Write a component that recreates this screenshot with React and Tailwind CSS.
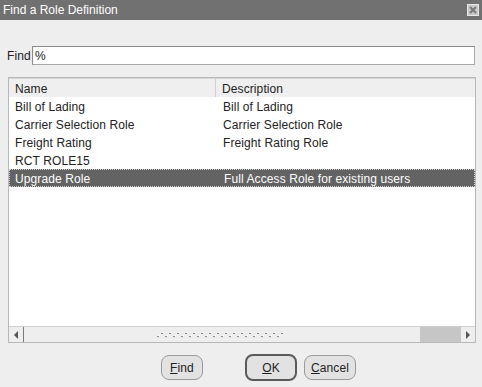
import React from "react";

const rows = [
  { name: "Bill of Lading", desc: "Bill of Lading" },
  { name: "Carrier Selection Role", desc: "Carrier Selection Role" },
  { name: "Freight Rating", desc: "Freight Rating Role" },
  { name: "RCT ROLE15", desc: "" },
  { name: "Upgrade Role", desc: "Full Access Role for existing users", selected: true },
];

function CloseIcon() {
  return (
    <svg width="12" height="12" viewBox="0 0 12 12">
      <rect x="0.5" y="0.5" width="11" height="11" fill="#c8c8c8" stroke="#e6e6e6" />
      <path d="M3 3 L9 9 M9 3 L3 9" stroke="#7a7a7a" strokeWidth="2" />
    </svg>
  );
}

function Grip() {
  const marks = [];
  for (let i = 0; i < 16; i++) {
    marks.push(<rect key={"a" + i} x={i * 8 + 4} y={2} width="2" height="1" fill="#8a8a8a" />);
    marks.push(<rect key={"b" + i} x={i * 8 + 6} y={1} width="1" height="1" fill="#ffffff" />);
    marks.push(<rect key={"c" + i} x={i * 8} y={5} width="2" height="1" fill="#8a8a8a" />);
    marks.push(<rect key={"d" + i} x={i * 8 + 2} y={4} width="1" height="1" fill="#ffffff" />);
  }
  return (
    <svg width="130" height="7" viewBox="0 0 130 7">
      {marks}
    </svg>
  );
}

function Btn({ children, def, w }) {
  return (
    <button
      className={
        def
          ? "h-[27px] rounded-[8px] border-2 border-[#5a5a5a] bg-[#e2e2e2] text-[12px] text-[#222]"
          : "h-[25px] rounded-[8px] border border-[#9a9a9a] bg-[#e2e2e2] text-[12px] text-[#222]"
      }
      style={{ width: w }}
    >
      {children}
    </button>
  );
}

export default function App() {
  return (
    <div
      className="w-[482px] h-[387px] bg-[#eeeeee] flex flex-col overflow-hidden text-[12px] text-[#222] tracking-[0.1px]"
      style={{ fontFamily: '"Liberation Sans", Arial, sans-serif' }}
    >
      <div className="h-[20px] bg-[#717171] flex items-center justify-between pl-[3px] pr-[3px] text-white text-[12px] tracking-normal">
        <span>Find a Role Definition</span>
        <CloseIcon />
      </div>

      <div className="flex items-center mt-[26px] pl-[7px]">
        <span className="w-[25px] pt-[1px]">Find</span>
        <div className="w-[443px] h-[19px] bg-white border border-[#a8a8a8] border-t-[#8a8a8a] border-l-[#8a8a8a] flex items-center pl-[2px] pt-[1px]">
          %
        </div>
      </div>

      <div className="ml-[8px] mt-[12px] w-[468px] h-[266px] border border-[#b8b8b8] bg-white flex flex-col">
        <div className="h-[19px] bg-[#efefef] flex items-center border-t border-[#d6d6d6]">
          <div className="w-[207px] h-full pl-[6px] pt-[1px] flex items-center border-r border-[#cfcfcf]">Name</div>
          <div className="pl-[6px] pt-[1px]">Description</div>
        </div>
        {rows.map((r) => (
          <div
            key={r.name}
            className={
              r.selected
                ? "h-[18px] flex items-center pt-[1px] bg-[#636363] text-white border border-dotted border-[#d0d0d0]"
                : "h-[18px] flex items-center pt-[2px]"
            }
          >
            <div className={r.selected ? "w-[207px] pl-[5px]" : "w-[207px] pl-[6px]"}>{r.name}</div>
            <div className="pl-[7px]">{r.desc}</div>
          </div>
        ))}
        <div className="flex-1" />
        <div className="h-[16px] border-t border-[#cfcfcf] bg-[#eeeeee] flex">
          <div className="w-[14px] h-full flex items-center justify-center rounded-l-[6px] border-r border-[#7a7a7a] ml-[1px]">
            <svg width="5" height="8" viewBox="0 0 5 8">
              <path d="M4 0 L0 4 L4 8 Z" fill="#555" />
            </svg>
          </div>
          <div className="w-[396px] h-full flex items-center justify-center">
            <Grip />
          </div>
          <div className="w-[41px] h-full bg-[#c6c6c6]" />
          <div className="w-[14px] h-full flex items-center justify-center rounded-r-[6px] bg-[#eeeeee]">
            <svg width="5" height="8" viewBox="0 0 5 8">
              <path d="M0 0 L4 4 L0 8 Z" fill="#555" />
            </svg>
          </div>
        </div>
      </div>

      <div className="flex items-center mt-[11px] pl-[161px]">
        <Btn w={42}>
          <span className="underline">F</span>ind
        </Btn>
        <div className="w-[42px]" />
        <Btn def w={52}>
          <span className="underline">O</span>K
        </Btn>
        <div className="w-[7px]" />
        <Btn w={52}>
          <span className="underline">C</span>ancel
        </Btn>
      </div>
    </div>
  );
}
